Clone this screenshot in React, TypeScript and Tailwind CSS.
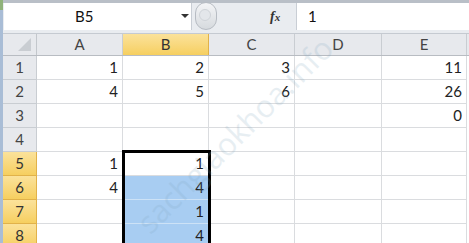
import React from "react";

const cols = ["A", "B", "C", "D", "E"];
const colW = ["w-[86px]", "w-[86px]", "w-[86px]", "w-[87px]", "w-[85px]"];

type Cell = string | undefined;
const data: Cell[][] = [
  ["1", "2", "3", undefined, "11"],
  ["4", "5", "6", undefined, "26"],
  [undefined, undefined, undefined, undefined, "0"],
  [undefined, undefined, undefined, undefined, undefined],
  ["1", "1", undefined, undefined, undefined],
  ["4", "4", undefined, undefined, undefined],
  [undefined, "1", undefined, undefined, undefined],
  [undefined, "4", undefined, undefined, undefined],
];

const font = { fontFamily: "Lato, 'Open Sans', sans-serif" };

export default function App() {
  return (
    <div
      className="relative w-[469px] h-[243px] overflow-hidden bg-white flex text-[#222]"
      style={font}
    >
      {/* left window edge */}
      <div className="w-[3px] flex flex-col shrink-0">
        <div className="h-[10px] bg-[#8fb27a]" />
        <div className="flex-1 bg-[#a9bdd6]" />
      </div>

      <div className="flex-1 flex flex-col min-w-0">
        {/* formula bar */}
        <div className="h-[34px] shrink-0 bg-[#e9ecf0] border-t-[3px] border-[#b9bfc7] border-b border-b-[#c5cad1] flex items-stretch pb-[3px]">
          <div className="w-[188px] ml-[1px] bg-white border-r border-[#c9ced5] flex items-center relative">
            <span className="absolute left-[71px] text-[15px] text-[#111]">B5</span>
            <span className="absolute left-[177px] top-[11px] w-0 h-0 border-l-[4px] border-r-[4px] border-t-[4px] border-l-transparent border-r-transparent border-t-[#333]" />
          </div>
          <div className="w-[104px] flex items-center relative">
            <div className="absolute left-[3px] top-[-1px] w-[22px] h-[28px] rounded-full bg-gradient-to-b from-[#f4f5f7] to-[#d6dade] border border-[#b7bcc3]" />
            <div className="absolute left-[7px] top-[6px] w-[12px] h-[12px] rounded-full bg-[#e3e6ea] border border-[#cfd3d8]" />
            <span
              className="absolute left-[78px] top-[3px] text-[14px] italic font-bold text-[#333]"
              style={{ fontFamily: "'Liberation Serif', serif" }}
            >
              f<span className="text-[11px]">x</span>
            </span>
          </div>
          <div className="flex-1 bg-white border-l border-[#c9ced5] flex items-center pl-[11px] text-[15px] text-[#111]">
            1
          </div>
        </div>

        {/* column headers */}
        <div className="h-[22px] shrink-0 flex bg-[#e7e9ed] border-b border-[#b8bcc2]">
          <div className="w-[34px] border-r border-[#c3c7cc] relative">
            <svg className="absolute right-[5px] bottom-[4px]" width="13" height="13" viewBox="0 0 13 13">
              <polygon points="13,0 13,13 0,13" fill="#c9cdd2" />
            </svg>
          </div>
          {cols.map((c, i) => (
            <div
              key={c}
              className={`${colW[i]} flex items-center justify-center text-[15px] border-r ${
                c === "B"
                  ? "bg-gradient-to-b from-[#fbe29a] to-[#f6cf5f] border-[#e1b24a] text-[#333]"
                  : "border-[#c9cdd2] text-[#444]"
              }`}
            >
              {c}
            </div>
          ))}
        </div>

        {/* rows */}
        {data.map((row, r) => {
          const sel = r >= 4;
          return (
            <div key={r} className="h-[24px] shrink-0 flex">
              <div
                className={`w-[34px] flex items-center justify-center text-[15px] border-r border-b ${
                  sel
                    ? "bg-gradient-to-b from-[#fbe29a] to-[#f6cf5f] border-[#e1b24a] text-[#333]"
                    : "bg-[#e7e9ed] border-[#c9cdd2] text-[#444]"
                }`}
              >
                {r + 1}
              </div>
              {row.map((v, i) => {
                const blue = i === 1 && r >= 5;
                return (
                  <div
                    key={i}
                    className={`${colW[i]} flex items-center justify-end pr-[4px] text-[15px] border-r border-b ${
                      blue ? "bg-[#a8cdf2] border-[#cde2f6]" : "border-[#dadcdf]"
                    }`}
                  >
                    {v}
                  </div>
                );
              })}
            </div>
          );
        })}
      </div>

      {/* selection box */}
      <div className="absolute left-[122px] top-[150px] w-[89px] h-[110px] border-[3px] border-black pointer-events-none" />

      {/* watermark */}
      <div
        className="absolute left-[142px] top-[208px] text-[31px] leading-[38px] text-[#7fa6bd] opacity-[0.18] pointer-events-none origin-left whitespace-nowrap"
        style={{ transform: "rotate(-45deg)", fontFamily: "'Open Sans', sans-serif" }}
      >
        sachgiaokhoa.info
      </div>
    </div>
  );
}
